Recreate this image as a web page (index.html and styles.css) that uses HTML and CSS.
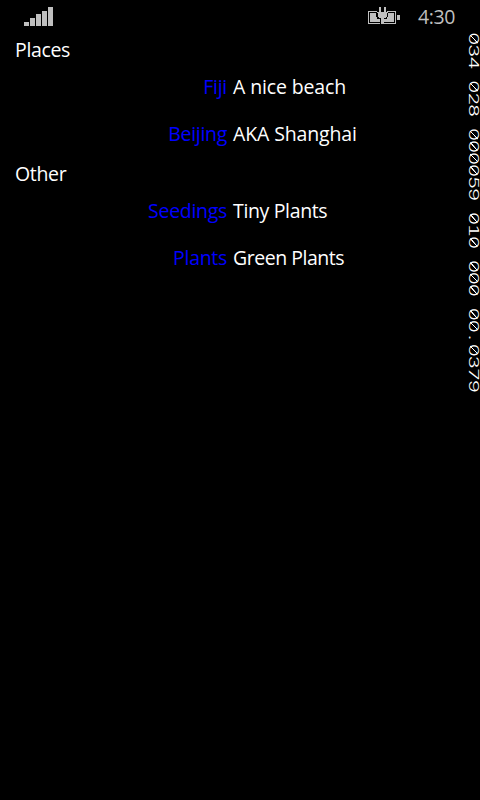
FILE: index.html
```html
<!DOCTYPE html>
<html lang="en">
<head>
<meta charset="utf-8">
<title>Places</title>
<link rel="stylesheet" href="styles.css">
</head>
<body>
<header class="status">
  <svg class="signal" width="30" height="20" viewBox="0 0 30 20" shape-rendering="crispEdges">
    <path d="M0 15h5v4H0zM6 11h5v8H6zM12 7h5v12h-5zM18 4h5v15h-5zM24 0h5v19h-5z"/>
  </svg>
  <svg class="battery" width="32" height="18" viewBox="0 0 32 18" shape-rendering="crispEdges">
    <path d="M0 4h9v1H1v11h11v1H0zM19 4h9v13H16v-1h11V5h-8zM29 8h3v5h-3z"/>
    <path d="M2 6h6v4h1v2h3v3H2zM20 6h6v9H16v-3h3v-2h1zM11 0h2v5h3V0h2v5h2v1h-1v4h-1v1h-2v6h-3v-6h-2v-1h-1V6H9V5h2z"/>
  </svg>
  <span class="clock">4:30</span>
</header>
<main>
  <section>
    <h2>Places</h2>
    <div class="row"><span class="name">Fiji</span><span class="detail airy">A nice beach</span></div>
    <div class="row"><span class="name">Beijing</span><span class="detail airy">AKA Shanghai</span></div>
  </section>
  <section>
    <h2>Other</h2>
    <div class="row"><span class="name">Seedings</span><span class="detail">Tiny Plants</span></div>
    <div class="row"><span class="name">Plants</span><span class="detail tight">Green Plants</span></div>
  </section>
</main>
<div class="counters"><span><b>0</b>34</span><span><b>0</b>28</span><span><b>0</b><b>0</b><b>0</b><b>0</b>59</span><span><b>0</b>1<b>0</b></span><span><b>0</b><b>0</b><b>0</b></span><span><b>0</b><b>0</b><i>.</i><b>0</b>379</span></div>
</body>
</html>
```
FILE: styles.css
```css
* { box-sizing: border-box; }
body {
  margin: 0;
  height: 800px;
  position: relative;
  overflow: hidden;
  background: #000;
  color: #fff;
  font: 19.5px/30px "Open Sans", "Noto Sans", sans-serif;
  letter-spacing: -0.35px;
}
.status {
  display: flex;
  align-items: flex-start;
  height: 35px;
  padding: 7px 24px 0;
  color: #bfbfbf;
}
.status svg { fill: #bfbfbf; }
.battery { margin-left: auto; }
.clock { width: 38px; margin: -5px 0 0 18px; white-space: nowrap; }
h2 {
  margin: 0;
  padding-left: 15px;
  height: 30px;
  font-size: inherit;
  font-weight: 400;
}
.row {
  display: grid;
  grid-template-columns: 227px 1fr;
  column-gap: 6px;
  height: 47px;
  padding-top: 7px;
}
.name {
  color: #00f;
  text-align: right;
  letter-spacing: -0.3px;
  font-variant-ligatures: none;
}
.airy { letter-spacing: -0.13px; }
.tight { letter-spacing: -0.48px; }
.counters {
  position: absolute;
  left: 478.5px;
  top: 31.5px;
  display: flex;
  gap: 7.5px;
  font: 300 13.3px/11px Inter, sans-serif;
  font-feature-settings: "tnum";
  letter-spacing: -1.12px;
  white-space: nowrap;
  transform-origin: 0 0;
  transform: rotate(90deg) scaleX(1.6);
}
.counters b {
  font-weight: 300;
  background: linear-gradient(to bottom right, transparent 46%, #fff 47%, #fff 53%, transparent 54%) 1.6px 4px / 5.2px 8px no-repeat;
}
.counters i {
  display: inline-block;
  width: 7.5px;
  padding-left: 2px;
  font-style: normal;
}
```
